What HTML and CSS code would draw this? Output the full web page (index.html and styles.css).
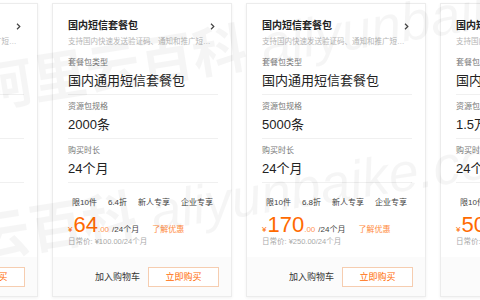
FILE: index.html
```html
<!DOCTYPE html>
<html lang="zh-CN">
<head>
    <meta charset="UTF-8">
    <title>短信套餐包</title>
    <link rel="stylesheet" href="styles.css">
</head>
<body>
<div class="list">
    <div class="card">
        <div class="head">
            <div class="title">国内短信套餐包<svg class="arrow" width="5" height="7" viewBox="0 0 5 7"><path d="M1 0.8 L3.8 3.5 L1 6.2" fill="none" stroke="#444" stroke-width="1.2"/></svg></div>
            <div class="desc">支持国内快速发送验证码、通知和推广短信，三网合一</div>
        </div>
        <div class="field first"><div class="label">套餐包类型</div><div class="value">国内通用短信套餐包</div></div>
        <div class="field"><div class="label">资源包规格</div><div class="value">1000条</div></div>
        <div class="field"><div class="label">购买时长</div><div class="value">24个月</div></div>
        <div class="tags"><span>限10件</span><span>6.8折</span><span>新人专享</span></div>
        <div class="price"><span class="yen">¥</span><span class="num">36</span><span class="dec">.00</span><span class="per">/24个月</span><a class="more">了解优惠</a></div>
        <div class="origin">日常价: ¥53.00/24个月</div>
        <div class="foot"><span class="cart">加入购物车</span><span class="buy">立即购买</span></div>
    </div>
    <div class="card">
        <div class="head">
            <div class="title">国内短信套餐包<svg class="arrow" width="5" height="7" viewBox="0 0 5 7"><path d="M1 0.8 L3.8 3.5 L1 6.2" fill="none" stroke="#444" stroke-width="1.2"/></svg></div>
            <div class="desc">支持国内快速发送验证码、通知和推广短信，三网合一</div>
        </div>
        <div class="field first"><div class="label">套餐包类型</div><div class="value">国内通用短信套餐包</div></div>
        <div class="field"><div class="label">资源包规格</div><div class="value">2000条</div></div>
        <div class="field"><div class="label">购买时长</div><div class="value">24个月</div></div>
        <div class="tags"><span>限10件</span><span>6.4折</span><span>新人专享</span><span>企业专享</span></div>
        <div class="price"><span class="yen">¥</span><span class="num">64</span><span class="dec">.00</span><span class="per">/24个月</span><a class="more">了解优惠</a></div>
        <div class="origin">日常价: ¥100.00/24个月</div>
        <div class="foot"><span class="cart">加入购物车</span><span class="buy">立即购买</span></div>
    </div>
    <div class="card">
        <div class="head">
            <div class="title">国内短信套餐包<svg class="arrow" width="5" height="7" viewBox="0 0 5 7"><path d="M1 0.8 L3.8 3.5 L1 6.2" fill="none" stroke="#444" stroke-width="1.2"/></svg></div>
            <div class="desc">支持国内快速发送验证码、通知和推广短信，三网合一</div>
        </div>
        <div class="field first"><div class="label">套餐包类型</div><div class="value">国内通用短信套餐包</div></div>
        <div class="field"><div class="label">资源包规格</div><div class="value">5000条</div></div>
        <div class="field"><div class="label">购买时长</div><div class="value">24个月</div></div>
        <div class="tags"><span>限10件</span><span>6.8折</span><span>新人专享</span><span>企业专享</span></div>
        <div class="price"><span class="yen">¥</span><span class="num">170</span><span class="dec">.00</span><span class="per">/24个月</span><a class="more">了解优惠</a></div>
        <div class="origin">日常价: ¥250.00/24个月</div>
        <div class="foot"><span class="cart">加入购物车</span><span class="buy">立即购买</span></div>
    </div>
    <div class="card">
        <div class="head">
            <div class="title">国内短信套餐包<svg class="arrow" width="5" height="7" viewBox="0 0 5 7"><path d="M1 0.8 L3.8 3.5 L1 6.2" fill="none" stroke="#444" stroke-width="1.2"/></svg></div>
            <div class="desc">支持国内快速发送验证码、通知和推广短信，三网合一</div>
        </div>
        <div class="field first"><div class="label">套餐包类型</div><div class="value">国内通用短信套餐包</div></div>
        <div class="field"><div class="label">资源包规格</div><div class="value">1.5万条</div></div>
        <div class="field"><div class="label">购买时长</div><div class="value">24个月</div></div>
        <div class="tags"><span>限10件</span><span>6.7折</span><span>新人专享</span><span>企业专享</span></div>
        <div class="price"><span class="yen">¥</span><span class="num">500</span><span class="dec">.00</span><span class="per">/24个月</span><a class="more">了解优惠</a></div>
        <div class="origin">日常价: ¥750.00/24个月</div>
        <div class="foot"><span class="cart">加入购物车</span><span class="buy">立即购买</span></div>
    </div>
</div>
<!-- 水印 -->
<div class="mark mark1">阿里云百科 <i>aliyunbaike.com</i></div>
<div class="mark mark2">阿里云百科 <i>aliyunbaike.com</i></div>
</body>
</html>
```

FILE: styles.css
```css
html, body, div, span, a {
    margin: 0;
    padding: 0;
}

body {
    position: relative;
    width: 480px;
    height: 300px;
    overflow: hidden;
    background: #fff;
    font-family: "Liberation Sans", "Noto Sans CJK SC", sans-serif;
    color: #333;
}

.list {
    display: flex;
    gap: 14px;
    margin-left: -142px;
    padding-top: 3px;
}

.card {
    flex: none;
    width: 180px;
    height: 294px;
    box-sizing: border-box;
    border: 1px solid #ececec;
    box-shadow: 0 1px 3px rgba(0, 0, 0, 0.06);
    display: flex;
    flex-direction: column;
}

.head {
    padding: 15px 13px 0 15px;
}

.title {
    display: flex;
    justify-content: space-between;
    align-items: center;
    font-size: 10px;
    line-height: 14px;
    font-weight: bold;
    color: #222;
}

.arrow {
    margin-right: 3px;
}

.desc {
    margin-top: 3px;
    width: 148px;
    font-size: 7.5px;
    line-height: 12px;
    color: #b5b5b5;
    white-space: nowrap;
    overflow: hidden;
    text-overflow: ellipsis;
}

.field {
    margin: 0 13px 0 15px;
    padding: 6px 0 4px;
    border-bottom: 1px solid #f0f0f0;
}

.field.first {
    margin-top: 3px;
}

.label {
    font-size: 8px;
    line-height: 12px;
    color: #777;
}

.field.first .label {
    margin-bottom: 2px;
}

.value {
    margin-top: 3px;
    font-size: 13px;
    line-height: 18px;
    color: #222;
}

.tags {
    display: flex;
    gap: 11px;
    margin: 13px 8px 0 19px;
    font-size: 8px;
    line-height: 14px;
    color: #444;
    white-space: nowrap;
}

.tags span {
    flex: none;
}

.price {
    display: flex;
    align-items: baseline;
    margin: 4px 13px 0 15px;
    height: 22px;
    line-height: 22px;
    color: #ff6a00;
}

.yen {
    font-size: 8px;
    margin-right: 1px;
}

.num {
    font-size: 22px;
}

.dec {
    font-size: 8px;
    opacity: 0.7;
}

.per {
    margin-left: 3px;
    font-size: 8px;
    color: #444;
}

.more {
    margin-left: 13px;
    font-size: 8px;
    color: #ff8a3d;
}

.origin {
    margin: 0 13px 0 15px;
    font-size: 7.5px;
    line-height: 12px;
    color: #aaa;
}

.foot {
    margin-top: auto;
    height: 39px;
    background: #fbfbfb;
    display: flex;
    align-items: center;
    justify-content: flex-end;
    padding-right: 12px;
}

.cart {
    font-size: 9px;
    color: #333;
    margin-right: 8px;
}

.buy {
    width: 71px;
    height: 20px;
    box-sizing: border-box;
    border: 1px solid #f6cdb0;
    background: #fff;
    color: #ff6a00;
    font-size: 9px;
    line-height: 18px;
    text-align: center;
}

/* watermark over the cards */
.mark {
    position: absolute;
    white-space: nowrap;
    pointer-events: none;
    font-size: 54px;
    font-weight: bold;
    color: rgba(0, 0, 0, 0.04);
    transform: rotate(-9deg);
    transform-origin: left bottom;
}

.mark i {
    font-size: 54px;
    font-weight: normal;
}

.mark1 {
    left: -15px;
    top: 45px;
}

.mark2 {
    left: -125px;
    top: 212px;
}
```
